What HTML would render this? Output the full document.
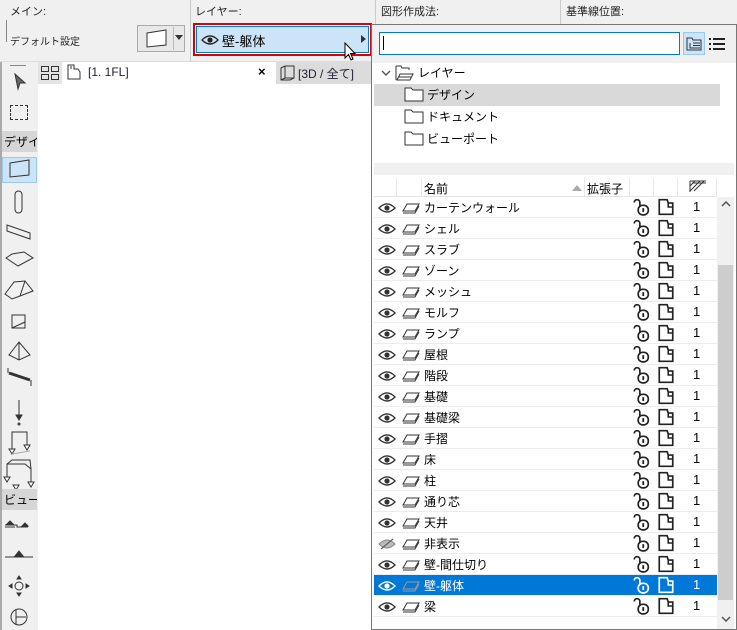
<!DOCTYPE html>
<html><head><meta charset="utf-8"><style>
*{margin:0;padding:0;box-sizing:border-box}
body{width:737px;height:630px;overflow:hidden;background:#fff;font-family:"Liberation Sans","Noto Sans CJK JP",sans-serif;font-size:12px;color:#000;position:relative}
.a{position:absolute}
.lbl{font-size:11px;color:#222}
.row{position:absolute;left:374px;width:343px;height:21px;border-bottom:1px solid #ececec}
.row span{position:absolute;top:2px;font-size:12px}
.row span.n{font-size:13px;top:2px}
.row svg{position:absolute}
.sel{background:#0078d7;color:#fff}
</style></head><body>
<svg width="0" height="0" style="position:absolute">
<defs>
<symbol id="eye" viewBox="0 0 18 12"><path d="M1 6Q9-2 17 6Q9 14 1 6Z" fill="none" stroke="currentColor" stroke-width="1.3"/><circle cx="9" cy="6" r="2.6" fill="currentColor"/></symbol>
<symbol id="pl" viewBox="0 0 20 12"><path d="M6 2H18L14 9H2Z" fill="none" stroke="currentColor" stroke-width="1"/><path d="M2 11H14L18 4" fill="none" stroke="currentColor" stroke-width="1"/></symbol>
<symbol id="lk" viewBox="0 0 16 16"><path d="M4 7V3.5A2.5 2.5 0 0 0 -1 3.5" transform="translate(3 0.5)" fill="none" stroke="currentColor" stroke-width="1.5"/><rect x="5.5" y="6.5" width="9" height="8.5" rx="4" fill="none" stroke="currentColor" stroke-width="1.5"/><path d="M10 9V12.5" stroke="currentColor" stroke-width="1.6"/></symbol>
<symbol id="pg" viewBox="0 0 16 16"><path d="M2 1.5H9L10 4.5H14V14.5H2Z" fill="none" stroke="currentColor" stroke-width="1.5"/><path d="M10 4.5V8H14" fill="none" stroke="currentColor" stroke-width="1.4"/></symbol>
<symbol id="fd" viewBox="0 0 20 16"><path d="M1 2H7L9 4H19V15H1Z" fill="#fff" stroke="#333" stroke-width="1"/></symbol>
</defs></svg>

<div class="a" style="left:0;top:0;width:737px;height:62px;background:#f0f0f0;border-bottom:1px solid #ddd"></div>
<div class="a" style="left:190px;top:0;width:1px;height:62px;background:#ccc"></div>
<div class="a" style="left:560px;top:0;width:1px;height:24px;background:#ccc"></div>
<div class="a" style="left:375px;top:0;width:1px;height:24px;background:#ccc"></div>
<div class="a lbl" style="left:10px;top:3px">メイン:</div>
<div class="a lbl" style="left:195px;top:3px">レイヤー:</div>
<div class="a lbl" style="left:381px;top:3px">図形作成法:</div>
<div class="a lbl" style="left:566px;top:3px">基準線位置:</div>
<div class="a" style="left:6px;top:20px;width:1px;height:22px;background:#888"></div>
<div class="a lbl" style="left:10px;top:33px;font-size:10px">デフォルト設定</div>
<div class="a" style="left:137px;top:25px;width:48px;height:27px;border:1px solid #aaa;background:#e8e8e8"></div>
<svg class="a" style="left:145px;top:29px" width="24" height="20"><path d="M2 4L21 1V16L2 18Z" fill="#fff" stroke="#333" stroke-width="1"/></svg>
<div class="a" style="left:173px;top:27px;width:1px;height:23px;background:#bbb"></div>
<svg class="a" style="left:175px;top:35px" width="8" height="6"><path d="M0 0H8L4 5Z" fill="#333"/></svg>
<div class="a" style="left:193px;top:23px;width:179px;height:33px;border:2px solid #e00000;background:#fff"></div>
<div class="a" style="left:196px;top:26px;width:173px;height:27px;border:1px solid #0078d7;background:#cce4f7"></div>
<svg class="a" style="left:201px;top:34px;color:#222" width="18" height="12"><use href="#eye"/></svg>
<div class="a" style="left:222px;top:31px;font-size:13px">壁-躯体</div>
<svg class="a" style="left:361px;top:35px" width="5" height="8"><path d="M0 0L5 4L0 8Z" fill="#333"/></svg>
<svg class="a" style="left:344px;top:42px" width="14" height="20"><path d="M1 1V16L4.5 12.5L7 18L9 17L6.5 11.5H11Z" fill="#fff" stroke="#000" stroke-width="1"/></svg>

<div class="a" style="left:0;top:62px;width:38px;height:568px;background:#f0f0f0;border-left:2px solid #aaa"></div>
<div class="a" style="left:10px;top:65px;width:16px;height:1px;background:#888"></div>
<svg class="a" style="left:13px;top:73px" width="14" height="18"><path d="M2 1L12 10H7L5 16Z" fill="#666" stroke="#333"/></svg>
<div class="a" style="left:10px;top:105px;width:18px;height:15px;border:1px dashed #333"></div>
<div class="a" style="left:2px;top:131px;width:35px;height:21px;background:#d6d6d6;font-size:12px;padding:2px 0 0 2px;overflow:hidden;white-space:nowrap">デザイン</div>
<div class="a" style="left:2px;top:157px;width:35px;height:26px;background:#cce4f7;border:1px solid #99c9ef"></div>
<svg class="a" style="left:0;top:155px" width="38" height="475" fill="none" stroke="#333" stroke-width="1">
<path d="M10 8L29 5V20L10 22Z"/>
<rect x="15" y="36" width="7" height="22" rx="3.5"/>
<path d="M7 70L30 78V84L7 76Z"/><path d="M7 70V74"/>
<path d="M6 103L12 99L24 97L33 103L18 111Z"/>
<path d="M5 139L14 127L25 126L33 136L20 141L12 144Z"/><path d="M25 126L20 141"/>
<path d="M12 160H25V173H12Z"/><path d="M12 173L25 167V160"/>
<path d="M19 187L9 200L19 205L30 200Z"/><path d="M19 187V205"/>
<path d="M9 218L30 225" stroke-width="3"/><path d="M8 213V218M31 225V231"/>
<path d="M19 245V260"/><path d="M16 260L22 260L19 265Z" fill="#333"/><circle cx="19" cy="269" r="1" fill="#888"/>
<path d="M12 294V277H27V290"/><path d="M9 294H15L12 299Z M24 290H30L27 295Z" fill="#fff"/><path d="M12 299L30 296" stroke="#aaa"/>
<path d="M7 322V309H25L31 314V327M7 309L12 305H30L31 314"/><path d="M4 322H10L7 327Z M13 330H19L16 335Z M28 327H34L31 332Z" fill="#fff"/>
<path d="M5 370H17V372H28M5 372H15"/><path d="M7 369L10 366L13 369Z M22 371L25 368L28 371Z" fill="#333"/>
<path d="M5 402H33"/><path d="M15 401L19 396L23 401Z" fill="#333"/>
<circle cx="19" cy="431" r="4"/><path d="M17 424L19 421L21 424Z M17 438L19 441L21 438Z M12 429L9 431L12 433Z M26 429L29 431L26 433Z" fill="#333"/>
<circle cx="19" cy="462" r="8"/><path d="M16 455V469M16 462H26"/>
</svg>
<div class="a" style="left:2px;top:489px;width:35px;height:21px;background:#d6d6d6;font-size:12px;padding:2px 0 0 2px;overflow:hidden;white-space:nowrap">ビューオ</div>

<div class="a" style="left:38px;top:62px;width:24px;height:22px;background:#e4e4e4"></div>
<svg class="a" style="left:41px;top:66px" width="18" height="14" fill="none" stroke="#333"><rect x="0.5" y="0.5" width="7" height="5"/><rect x="10.5" y="0.5" width="7" height="5"/><rect x="0.5" y="8.5" width="7" height="5"/><rect x="10.5" y="8.5" width="7" height="5"/></svg>
<svg class="a" style="left:67px;top:64px" width="20" height="16" fill="none" stroke="#333"><path d="M1 1H7V5H11L13 8V15H1Z"/><path d="M4 2V5"/></svg>
<div class="a" style="left:88px;top:65px;font-size:12px;color:#223">[1. 1FL]</div>
<div class="a" style="left:258px;top:64px;font-size:13px;font-weight:bold">×</div>
<div class="a" style="left:276px;top:62px;width:96px;height:22px;background:#dcdcdc"></div>
<svg class="a" style="left:280px;top:65px" width="16" height="16" fill="none" stroke="#333"><path d="M1 3L5 1H14V13L10 15H1Z M5 1V13H14 M1 15L5 13"/></svg>
<div class="a" style="left:298px;top:65px;font-size:12px;color:#223">[3D / 全て]</div>

<div class="a" style="left:371px;top:24px;width:366px;height:606px;background:#fff;border:1px solid #777"></div>
<div class="a" style="left:372px;top:25px;width:364px;height:38px;background:#f0f0f0"></div>
<div class="a" style="left:379px;top:32px;width:301px;height:23px;border:1px solid #0078d7;background:#fff"></div>
<div class="a" style="left:383px;top:36px;width:1px;height:14px;background:#000"></div>
<div class="a" style="left:683px;top:32px;width:22px;height:23px;background:#cce4f7;border:1px solid #99c9ef"></div>
<svg class="a" style="left:686px;top:36px" width="17" height="15" fill="none" stroke="#333"><path d="M1 2H6L7 4H15V14H1Z"/><path d="M7 7H14M7 9.5H14M7 12H14M4 7V12H7" stroke-width="1"/></svg>
<svg class="a" style="left:709px;top:38px" width="16" height="12" fill="#222"><rect x="0" y="0" width="2" height="2"/><rect x="4" y="0" width="12" height="2"/><rect x="0" y="5" width="2" height="2"/><rect x="4" y="5" width="12" height="2"/><rect x="0" y="10" width="2" height="2"/><rect x="4" y="10" width="12" height="2"/></svg>
<svg class="a" style="left:381px;top:70px" width="10" height="7"><path d="M1 1L5 5L9 1" fill="none" stroke="#555" stroke-width="1.4"/></svg>
<svg class="a" style="left:395px;top:64px" width="20" height="18" fill="none" stroke="#333"><path d="M1 2H6L7 4H14V6"/><path d="M1 2V16"/><path d="M5 10H18L15 16H2Z M3 13H16"/></svg>
<div class="a" style="left:418px;top:64px">レイヤー</div>
<div class="a" style="left:374px;top:84px;width:346px;height:22px;background:#d9d9d9"></div>
<svg class="a" style="left:404px;top:86px" width="20" height="16"><use href="#fd"/></svg><div class="a" style="left:427px;top:86px">デザイン</div>
<svg class="a" style="left:404px;top:108px" width="20" height="16"><use href="#fd"/></svg><div class="a" style="left:427px;top:108px">ドキュメント</div>
<svg class="a" style="left:404px;top:130px" width="20" height="16"><use href="#fd"/></svg><div class="a" style="left:427px;top:130px">ビューポート</div>
<div class="a" style="left:374px;top:163px;width:360px;height:12px;background:#f0f0f0"></div>

<div class="a" style="left:374px;top:178px;width:343px;height:19px;border-bottom:1px solid #e4e4e4"></div>
<div class="a" style="left:396px;top:178px;width:1px;height:19px;background:#e8e8e8"></div>
<div class="a" style="left:421px;top:178px;width:1px;height:19px;background:#e8e8e8"></div>
<div class="a" style="left:584px;top:178px;width:1px;height:19px;background:#e8e8e8"></div>
<div class="a" style="left:629px;top:178px;width:1px;height:19px;background:#e8e8e8"></div>
<div class="a" style="left:653px;top:178px;width:1px;height:19px;background:#e8e8e8"></div>
<div class="a" style="left:677px;top:178px;width:1px;height:19px;background:#e8e8e8"></div>
<div class="a" style="left:716px;top:178px;width:1px;height:19px;background:#e8e8e8"></div>
<div class="a" style="left:424px;top:180px">名前</div>
<svg class="a" style="left:572px;top:185px" width="10" height="6"><path d="M0 6L5 0L10 6Z" fill="#aaa"/></svg>
<div class="a" style="left:587px;top:180px">拡張子</div>
<svg class="a" style="left:689px;top:180px" width="18" height="12" fill="none" stroke="#333"><path d="M1 1H17M1 1V12M3 3H17M1 6L6 1M1 11L11 1M5 11L15 1"/></svg>

<div class="a" style="left:717px;top:197px;width:17px;height:432px;background:#f0f0f0"></div>
<svg class="a" style="left:721px;top:201px" width="10" height="6"><path d="M1 5L5 1L9 5" fill="none" stroke="#555" stroke-width="1.5"/></svg>
<div class="a" style="left:718px;top:265px;width:15px;height:335px;background:#cdcdcd"></div>
<svg class="a" style="left:721px;top:616px" width="10" height="6"><path d="M1 1L5 5L9 1" fill="none" stroke="#555" stroke-width="1.5"/></svg>

<div id="rows">
<div class="row" style="top:197px"><svg style="left:4px;top:5px;color:#333" width="18" height="12"><use href="#eye"/></svg><svg style="left:27px;top:5px;color:#333" width="20" height="12"><use href="#pl"/></svg><span style="left:50px">カーテンウォール</span><svg style="left:258px;top:1px;color:#222" width="18" height="18"><use href="#lk"/></svg><svg style="left:283px;top:1px;color:#222" width="18" height="18"><use href="#pg"/></svg><span class="n" style="left:319px">1</span></div>
<div class="row" style="top:218px"><svg style="left:4px;top:5px;color:#333" width="18" height="12"><use href="#eye"/></svg><svg style="left:27px;top:5px;color:#333" width="20" height="12"><use href="#pl"/></svg><span style="left:50px">シェル</span><svg style="left:258px;top:1px;color:#222" width="18" height="18"><use href="#lk"/></svg><svg style="left:283px;top:1px;color:#222" width="18" height="18"><use href="#pg"/></svg><span class="n" style="left:319px">1</span></div>
<div class="row" style="top:239px"><svg style="left:4px;top:5px;color:#333" width="18" height="12"><use href="#eye"/></svg><svg style="left:27px;top:5px;color:#333" width="20" height="12"><use href="#pl"/></svg><span style="left:50px">スラブ</span><svg style="left:258px;top:1px;color:#222" width="18" height="18"><use href="#lk"/></svg><svg style="left:283px;top:1px;color:#222" width="18" height="18"><use href="#pg"/></svg><span class="n" style="left:319px">1</span></div>
<div class="row" style="top:260px"><svg style="left:4px;top:5px;color:#333" width="18" height="12"><use href="#eye"/></svg><svg style="left:27px;top:5px;color:#333" width="20" height="12"><use href="#pl"/></svg><span style="left:50px">ゾーン</span><svg style="left:258px;top:1px;color:#222" width="18" height="18"><use href="#lk"/></svg><svg style="left:283px;top:1px;color:#222" width="18" height="18"><use href="#pg"/></svg><span class="n" style="left:319px">1</span></div>
<div class="row" style="top:281px"><svg style="left:4px;top:5px;color:#333" width="18" height="12"><use href="#eye"/></svg><svg style="left:27px;top:5px;color:#333" width="20" height="12"><use href="#pl"/></svg><span style="left:50px">メッシュ</span><svg style="left:258px;top:1px;color:#222" width="18" height="18"><use href="#lk"/></svg><svg style="left:283px;top:1px;color:#222" width="18" height="18"><use href="#pg"/></svg><span class="n" style="left:319px">1</span></div>
<div class="row" style="top:302px"><svg style="left:4px;top:5px;color:#333" width="18" height="12"><use href="#eye"/></svg><svg style="left:27px;top:5px;color:#333" width="20" height="12"><use href="#pl"/></svg><span style="left:50px">モルフ</span><svg style="left:258px;top:1px;color:#222" width="18" height="18"><use href="#lk"/></svg><svg style="left:283px;top:1px;color:#222" width="18" height="18"><use href="#pg"/></svg><span class="n" style="left:319px">1</span></div>
<div class="row" style="top:323px"><svg style="left:4px;top:5px;color:#333" width="18" height="12"><use href="#eye"/></svg><svg style="left:27px;top:5px;color:#333" width="20" height="12"><use href="#pl"/></svg><span style="left:50px">ランプ</span><svg style="left:258px;top:1px;color:#222" width="18" height="18"><use href="#lk"/></svg><svg style="left:283px;top:1px;color:#222" width="18" height="18"><use href="#pg"/></svg><span class="n" style="left:319px">1</span></div>
<div class="row" style="top:344px"><svg style="left:4px;top:5px;color:#333" width="18" height="12"><use href="#eye"/></svg><svg style="left:27px;top:5px;color:#333" width="20" height="12"><use href="#pl"/></svg><span style="left:50px">屋根</span><svg style="left:258px;top:1px;color:#222" width="18" height="18"><use href="#lk"/></svg><svg style="left:283px;top:1px;color:#222" width="18" height="18"><use href="#pg"/></svg><span class="n" style="left:319px">1</span></div>
<div class="row" style="top:365px"><svg style="left:4px;top:5px;color:#333" width="18" height="12"><use href="#eye"/></svg><svg style="left:27px;top:5px;color:#333" width="20" height="12"><use href="#pl"/></svg><span style="left:50px">階段</span><svg style="left:258px;top:1px;color:#222" width="18" height="18"><use href="#lk"/></svg><svg style="left:283px;top:1px;color:#222" width="18" height="18"><use href="#pg"/></svg><span class="n" style="left:319px">1</span></div>
<div class="row" style="top:386px"><svg style="left:4px;top:5px;color:#333" width="18" height="12"><use href="#eye"/></svg><svg style="left:27px;top:5px;color:#333" width="20" height="12"><use href="#pl"/></svg><span style="left:50px">基礎</span><svg style="left:258px;top:1px;color:#222" width="18" height="18"><use href="#lk"/></svg><svg style="left:283px;top:1px;color:#222" width="18" height="18"><use href="#pg"/></svg><span class="n" style="left:319px">1</span></div>
<div class="row" style="top:407px"><svg style="left:4px;top:5px;color:#333" width="18" height="12"><use href="#eye"/></svg><svg style="left:27px;top:5px;color:#333" width="20" height="12"><use href="#pl"/></svg><span style="left:50px">基礎梁</span><svg style="left:258px;top:1px;color:#222" width="18" height="18"><use href="#lk"/></svg><svg style="left:283px;top:1px;color:#222" width="18" height="18"><use href="#pg"/></svg><span class="n" style="left:319px">1</span></div>
<div class="row" style="top:428px"><svg style="left:4px;top:5px;color:#333" width="18" height="12"><use href="#eye"/></svg><svg style="left:27px;top:5px;color:#333" width="20" height="12"><use href="#pl"/></svg><span style="left:50px">手摺</span><svg style="left:258px;top:1px;color:#222" width="18" height="18"><use href="#lk"/></svg><svg style="left:283px;top:1px;color:#222" width="18" height="18"><use href="#pg"/></svg><span class="n" style="left:319px">1</span></div>
<div class="row" style="top:449px"><svg style="left:4px;top:5px;color:#333" width="18" height="12"><use href="#eye"/></svg><svg style="left:27px;top:5px;color:#333" width="20" height="12"><use href="#pl"/></svg><span style="left:50px">床</span><svg style="left:258px;top:1px;color:#222" width="18" height="18"><use href="#lk"/></svg><svg style="left:283px;top:1px;color:#222" width="18" height="18"><use href="#pg"/></svg><span class="n" style="left:319px">1</span></div>
<div class="row" style="top:470px"><svg style="left:4px;top:5px;color:#333" width="18" height="12"><use href="#eye"/></svg><svg style="left:27px;top:5px;color:#333" width="20" height="12"><use href="#pl"/></svg><span style="left:50px">柱</span><svg style="left:258px;top:1px;color:#222" width="18" height="18"><use href="#lk"/></svg><svg style="left:283px;top:1px;color:#222" width="18" height="18"><use href="#pg"/></svg><span class="n" style="left:319px">1</span></div>
<div class="row" style="top:491px"><svg style="left:4px;top:5px;color:#333" width="18" height="12"><use href="#eye"/></svg><svg style="left:27px;top:5px;color:#333" width="20" height="12"><use href="#pl"/></svg><span style="left:50px">通り芯</span><svg style="left:258px;top:1px;color:#222" width="18" height="18"><use href="#lk"/></svg><svg style="left:283px;top:1px;color:#222" width="18" height="18"><use href="#pg"/></svg><span class="n" style="left:319px">1</span></div>
<div class="row" style="top:512px"><svg style="left:4px;top:5px;color:#333" width="18" height="12"><use href="#eye"/></svg><svg style="left:27px;top:5px;color:#333" width="20" height="12"><use href="#pl"/></svg><span style="left:50px">天井</span><svg style="left:258px;top:1px;color:#222" width="18" height="18"><use href="#lk"/></svg><svg style="left:283px;top:1px;color:#222" width="18" height="18"><use href="#pg"/></svg><span class="n" style="left:319px">1</span></div>
<div class="row" style="top:533px"><svg style="left:4px;top:5px;color:#888" width="18" height="12" viewBox="0 0 18 12"><path d="M1 6Q9-2 17 6Q9 14 1 6Z" fill="#bbb" stroke="#888"/><path d="M3 11L15 1" stroke="#666" stroke-width="1.3"/></svg><svg style="left:27px;top:5px;color:#333" width="20" height="12"><use href="#pl"/></svg><span style="left:50px">非表示</span><svg style="left:258px;top:1px;color:#222" width="18" height="18"><use href="#lk"/></svg><svg style="left:283px;top:1px;color:#222" width="18" height="18"><use href="#pg"/></svg><span class="n" style="left:319px">1</span></div>
<div class="row" style="top:554px"><svg style="left:4px;top:5px;color:#333" width="18" height="12"><use href="#eye"/></svg><svg style="left:27px;top:5px;color:#333" width="20" height="12"><use href="#pl"/></svg><span style="left:50px">壁-間仕切り</span><svg style="left:258px;top:1px;color:#222" width="18" height="18"><use href="#lk"/></svg><svg style="left:283px;top:1px;color:#222" width="18" height="18"><use href="#pg"/></svg><span class="n" style="left:319px">1</span></div>
<div class="row sel" style="top:575px"><svg style="left:4px;top:5px;color:#fff" width="18" height="12"><use href="#eye"/></svg><svg style="left:27px;top:5px;color:#999" width="20" height="12"><use href="#pl"/></svg><span style="left:50px">壁-躯体</span><svg style="left:258px;top:1px;color:#fff" width="18" height="18"><use href="#lk"/></svg><svg style="left:283px;top:1px;color:#fff" width="18" height="18"><use href="#pg"/></svg><span class="n" style="left:319px">1</span></div>
<div class="row" style="top:596px"><svg style="left:4px;top:5px;color:#333" width="18" height="12"><use href="#eye"/></svg><svg style="left:27px;top:5px;color:#333" width="20" height="12"><use href="#pl"/></svg><span style="left:50px">梁</span><svg style="left:258px;top:1px;color:#222" width="18" height="18"><use href="#lk"/></svg><svg style="left:283px;top:1px;color:#222" width="18" height="18"><use href="#pg"/></svg><span class="n" style="left:319px">1</span></div>
</div>
</body></html>
